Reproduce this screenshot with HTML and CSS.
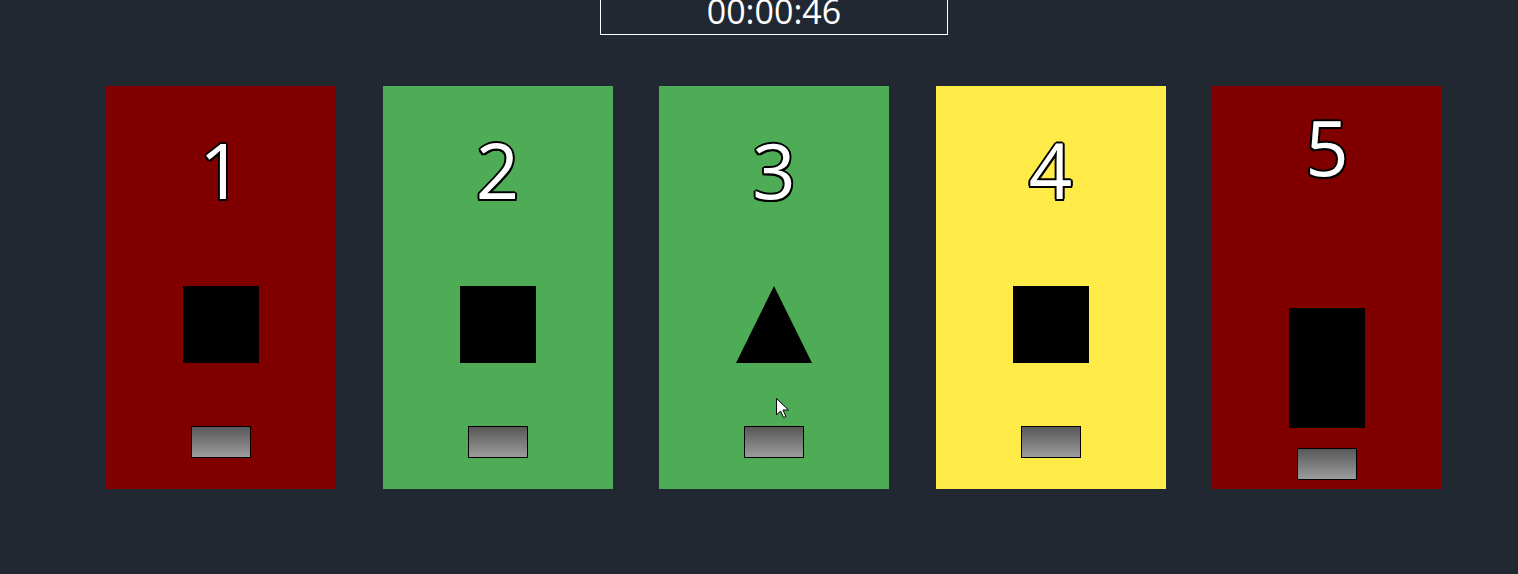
FILE: index.html
```html
<!DOCTYPE html>
<html lang="en">
<head>
  <meta charset="UTF-8" />
  <meta name="viewport" content="width=device-width, initial-scale=1.0">
  <title>Cards</title>
  <link rel="stylesheet" href="styles.css">
</head>
<body>
  <div class="timer">00:00:46</div>

  <div class="card-row">
    <div class="card red">
      <div class="number">1</div>
      <div class="shape square"></div>
      <button class="card-btn"></button>
    </div>
    <div class="card green">
      <div class="number">2</div>
      <div class="shape square"></div>
      <button class="card-btn"></button>
    </div>
    <div class="card green">
      <div class="number">3</div>
      <div class="shape triangle"></div>
      <button class="card-btn"></button>
    </div>
    <div class="card yellow">
      <div class="number">4</div>
      <div class="shape square"></div>
      <button class="card-btn"></button>
    </div>
    <div class="card red">
      <div class="number">5</div>
      <div class="shape tall"></div>
      <button class="card-btn"></button>
    </div>
  </div>

  <svg class="cursor" width="14" height="20" viewBox="0 0 14 20">
    <path d="M0.5 0.5 L0.5 17 L4.5 13 L7.5 19.5 L10 18.5 L7 12 L12.5 12 Z" fill="#fff" stroke="#000" stroke-width="1"/>
  </svg>
</body>
</html>
```

FILE: styles.css
```css
body {
  margin: 0;
  padding: 0 0 0 30px;
  background: #212832;
  color: white;
  font-family: 'Open Sans', 'Noto Sans', sans-serif;
  height: 574px;
  overflow: hidden;
  position: relative;
  box-sizing: border-box;
}
.timer {
  width: 348px;
  box-sizing: border-box;
  margin: -13px auto 0;
  border: 1px solid #fff;
  text-align: center;
  font-size: 34px;
  line-height: 46px;
}
.card-row {
  display: flex;
  justify-content: center;
  gap: 46.5px;
  margin-top: 51px;
}
.card {
  width: 230px;
  height: 403px;
  box-sizing: border-box;
  padding-top: 14px;
  display: flex;
  flex-direction: column;
  align-items: center;
  justify-content: center;
}
.card.red {
  background: #800000;
}
.card.green {
  background: #4eac56;
}
.card.yellow {
  background: #ffeb47;
}
.number {
  font-size: 76px;
  line-height: 76px;
  color: #fff;
  text-shadow:
    -2px 0 0 #000, 2px 0 0 #000, 0 -2px 0 #000, 0 2px 0 #000,
    -1.5px -1.5px 0 #000, 1.5px -1.5px 0 #000, -1.5px 1.5px 0 #000, 1.5px 1.5px 0 #000;
}
.shape {
  margin: 78px 0 63px;
}
.shape.square {
  width: 76px;
  height: 77px;
  background: #000;
}
.shape.triangle {
  width: 0;
  height: 0;
  border-left: 38px solid transparent;
  border-right: 38px solid transparent;
  border-bottom: 77px solid #000;
}
.shape.tall {
  width: 76px;
  height: 120px;
  background: #000;
  margin: 123px 0 20px;
}
.card-btn {
  width: 60px;
  height: 32px;
  padding: 0;
  border: 1px solid #000;
  border-radius: 0;
  background: linear-gradient(#585858, #9c9c9c);
}
.cursor {
  position: absolute;
  left: 776px;
  top: 398px;
}
```
